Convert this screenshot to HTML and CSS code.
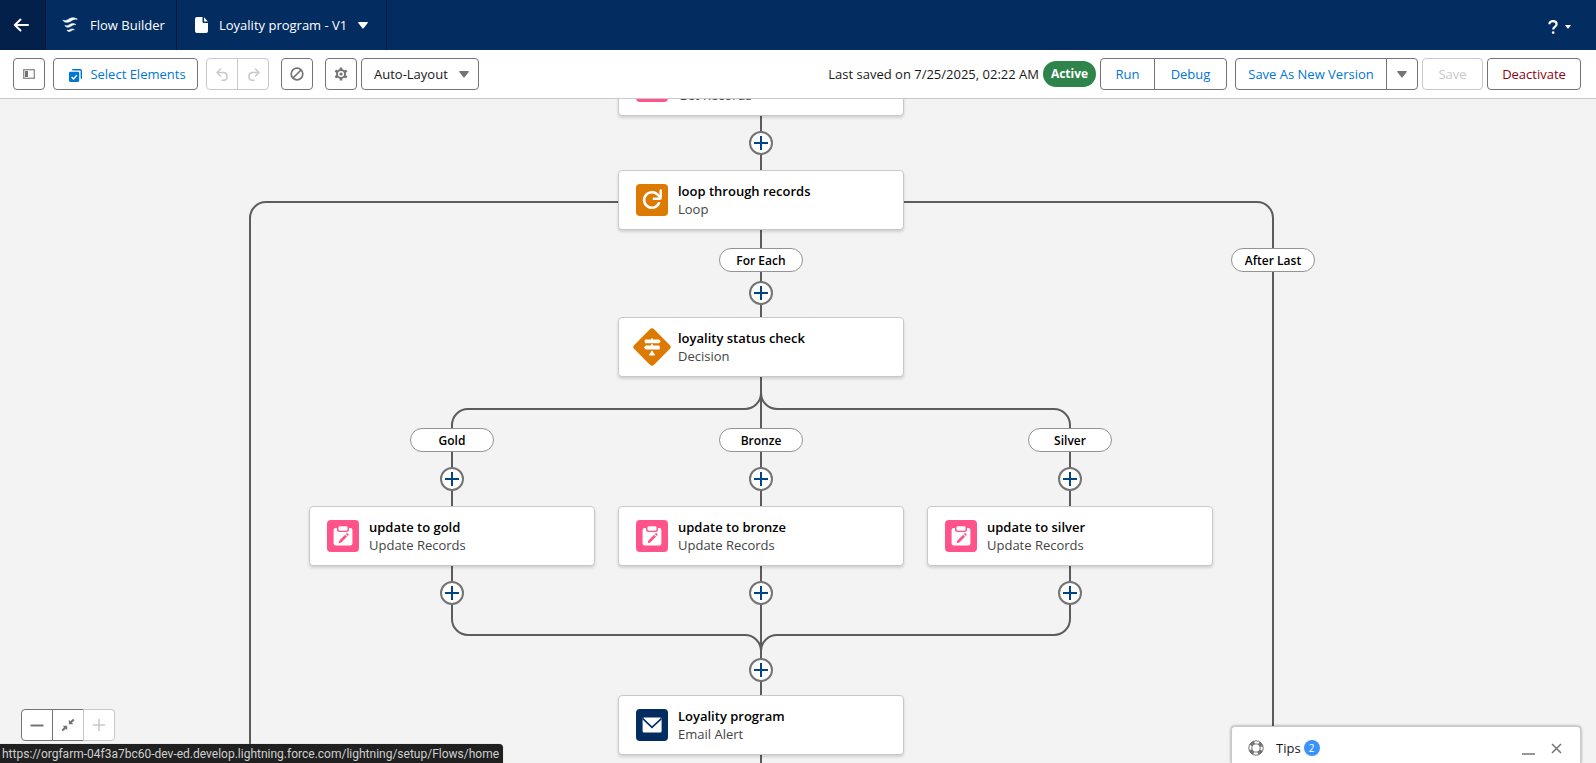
FILE: index.html
```html
<!DOCTYPE html>
<html lang="en">
<head>
<meta charset="utf-8">
<title>Flow Builder</title>
<link rel="stylesheet" href="styles.css">
</head>
<body>
<svg class="defs" aria-hidden="true">
  <symbol id="caret" viewBox="0 0 10 7"><path d="M0.6 0h8.800q.8.2.3.9L5.600 6.300q-.6.600-1.200 0L.3.9Q-.1.2.6 0z"/></symbol>
  <symbol id="plus" viewBox="0 0 14 14"><path d="M7 0v14M0 7h14" stroke="currentColor" stroke-width="2" fill="none"/></symbol>
  <symbol id="update" viewBox="0 0 32 32">
    <rect width="32" height="32" rx="4" fill="#ff538a"/>
    <path fill="#fff" d="M8.600 8h1.400v1.500a2.500 2.500 0 0 0 2.500 2.500h7a2.500 2.500 0 0 0 2.500-2.500V8h1.400a2 2 0 0 1 2 2v13.600a2 2 0 0 1-2 2H8.600a2 2 0 0 1-2-2V10a2 2 0 0 1 2-2z"/>
    <rect x="11.500" y="6.300" width="9" height="4.400" rx="1.400" fill="#fff"/>
    <path fill="#ff538a" d="M11.600 23.200l.8-2.700 5.700-5.700 1.900 1.900-5.700 5.700zM18.800 14.100l.8-.8q.5-.4 1 0l.9.900q.4.500 0 1l-.8.800z"/>
  </symbol>
</svg>

<header class="topbar">
  <a class="back" href="#" aria-label="Back">
    <svg width="16" height="14" viewBox="0 0 16 14"><path d="M15 7H2M7.500 1.500L1.800 7l5.700 5.500" fill="none" stroke="currentColor" stroke-width="2" stroke-linecap="round" stroke-linejoin="round"/></svg>
  </a>
  <div class="app">
    <svg width="16" height="16" viewBox="0 0 16 16" fill="currentColor"><path d="M.8 3.200C3.400 4 5 3.200 7 1.900 9.600.2 12.800.3 15.400 2.200 12.400 2 11 2.700 9 4 6.200 5.900 2.600 6 .8 3.200zM2.800 8.500C5 9 6.300 8.400 7.800 7.400 9.800 6.100 12 6.200 14 7.600 11.900 7.500 10.900 8 9.400 9.100 7.200 10.700 4.200 10.700 2.800 8.500zM5 13.200C6.400 13.500 7.300 13.100 8.200 12.500 9.600 11.600 11.200 11.700 12.400 12.700 11 12.700 10.300 13 9.300 13.800 7.700 15 5.800 14.900 5 13.200z" stroke="currentColor" stroke-width=".5" stroke-linejoin="round"/></svg>
    <span>Flow Builder</span>
  </div>
  <button class="flow-name" type="button">
    <svg width="13" height="16" viewBox="0 0 13 16" fill="currentColor"><path d="M2 0h5.500v4.500A1.500 1.500 0 0 0 9 6h4v8a2 2 0 0 1-2 2H2a2 2 0 0 1-2-2V2a2 2 0 0 1 2-2zM9 .3L12.800 4.600H9z"/></svg>
    <span>Loyality program - V1</span>
    <svg class="caret" width="10" height="7"><use href="#caret"/></svg>
  </button>
  <button class="help" type="button" aria-label="Help">
    <svg width="10" height="14" viewBox="0 0 10 14"><path d="M1.400 4.200C1.400 2.300 3 1.200 5 1.200s3.600 1.200 3.600 3C8.600 6.600 5.200 6.600 5.200 9.600" fill="none" stroke="currentColor" stroke-width="2.200"/><circle cx="5.200" cy="12.600" r="1.300" fill="currentColor"/></svg>
    <svg class="caret" width="6" height="4"><use href="#caret"/></svg>
  </button>
</header>

<div class="toolbar">
  <button class="btn icon" type="button" aria-label="Toggle panel">
    <svg width="12" height="10" viewBox="0 0 12 10"><rect x=".7" y=".7" width="10.600" height="8.600" fill="none" stroke="#939393" stroke-width="1.400"/><rect x="2" y="2" width="3" height="6" fill="#747474"/></svg>
  </button>
  <button class="btn select-elements" type="button">
    <svg width="13" height="13" viewBox="0 0 13 13"><path d="M3.500 1.200Q3.500.7 4 .7h7.300q1 0 1 1V9q0 .5-.5.5" fill="none" stroke="#0176d3" stroke-width="1.400"/><rect y="2.800" width="10.200" height="10.200" rx="1.400" fill="#0176d3"/><path d="M2.600 8l1.900 1.900 3.300-3.700" fill="none" stroke="#fff" stroke-width="1.400"/></svg>
    <span>Select Elements</span>
  </button>
  <div class="group">
    <button class="btn icon" type="button" aria-label="Undo" disabled>
      <svg width="13" height="13" viewBox="0 0 13 13" fill="none" stroke="currentColor" stroke-width="1.500" stroke-linecap="round" stroke-linejoin="round"><path d="M4.500 1L1 4.500 4.500 8M1.500 4.500H8a4 4 0 0 1 0 7.800H6"/></svg>
    </button>
    <button class="btn icon" type="button" aria-label="Redo" disabled>
      <svg width="13" height="13" viewBox="0 0 13 13" fill="none" stroke="currentColor" stroke-width="1.500" stroke-linecap="round" stroke-linejoin="round"><path d="M8.500 1L12 4.500 8.500 8M11.500 4.500H5a4 4 0 0 0 0 7.800h2"/></svg>
    </button>
  </div>
  <button class="btn icon stop" type="button" aria-label="Errors">
    <svg width="14" height="14" viewBox="0 0 14 14" fill="none" stroke="#747474" stroke-width="1.700"><circle cx="7" cy="7" r="5.800"/><path d="M3 11l8-8"/></svg>
  </button>
  <div class="settings">
    <button class="btn icon" type="button" aria-label="Settings">
      <svg width="14" height="14" viewBox="0 0 14 14" fill="none" stroke="#747474"><circle cx="7" cy="7" r="4" stroke-width="1.900"/><circle cx="7" cy="7" r="1.600" fill="#747474" stroke="none"/><path d="M7 .4v2.400M7 11.200v2.400M1.300 3.700l2.100 1.200M10.600 9.100l2.100 1.200M1.300 10.300l2.100-1.200M10.600 4.900l2.100-1.200" stroke-width="2.600"/></svg>
    </button>
    <div class="layout">
      <select aria-label="Layout mode"><option>Auto-Layout</option></select>
      <svg class="caret" width="10" height="7"><use href="#caret"/></svg>
    </div>
  </div>

  <div class="actions">
    <span class="saved">Last saved on 7/25/2025, 02:22 AM</span>
    <span class="badge">Active</span>
    <div class="group run-group">
      <button class="btn run" type="button">Run</button>
      <button class="btn debug" type="button">Debug</button>
    </div>
    <div class="group">
      <button class="btn save-as" type="button">Save As New Version</button>
      <button class="btn icon" type="button" aria-label="More save options"><svg class="caret" width="10" height="7"><use href="#caret"/></svg></button>
    </div>
    <button class="btn save" type="button" disabled>Save</button>
    <button class="btn deactivate" type="button">Deactivate</button>
  </div>
</div>

<main class="canvas">
  <div class="stage">
    <svg class="wires" width="1" height="1" fill="none" stroke="#5c5c5c" stroke-width="2">
      <path d="M0 0V700"/>
      <path d="M-142 103H-495a16 16 0 0 0-16 16V700"/>
      <path d="M142 103H496a16 16 0 0 1 16 16V700"/>
      <path d="M0 278v16a16 16 0 0 1-16 16H-293a16 16 0 0 0-16 16V520a16 16 0 0 0 16 16H-16a16 16 0 0 1 16 16"/>
      <path d="M0 278v16a16 16 0 0 0 16 16H293a16 16 0 0 1 16 16V520a16 16 0 0 1-16 16H16a16 16 0 0 0-16 16"/>
    </svg>

    <button class="node mid get" type="button">
      <svg width="32" height="32"><use href="#update"/></svg>
      <span class="label"><span>Get Records</span></span>
    </button>
    <button class="node mid loop" type="button">
      <svg width="32" height="32" viewBox="0 0 32 32"><rect width="32" height="32" rx="4" fill="#dd7a01"/><path d="M23.400 18.200a7.800 7.800 0 1 1-2-7.800L24 13" fill="none" stroke="#fff" stroke-width="2.600"/><path d="M17.800 14.700h6.300q.6 0 .6-.6V6.400" fill="none" stroke="#fff" stroke-width="2.400" stroke-linecap="round"/></svg>
      <span class="label"><b>loop through records</b><span>Loop</span></span>
    </button>
    <button class="node mid decision" type="button">
      <svg width="32" height="32" viewBox="0 0 32 32" overflow="visible"><rect x="2" y="2" width="28" height="28" rx="3" fill="#dd7a01" transform="rotate(45 16 16)"/><g fill="#fff"><path d="M15 7.500h2v1h6l1.700 1.800-1.700 1.900H9.500q-.8 0-.8-.8V9.300q0-.8.8-.8H15zM9.800 14.600H15v-1.400h2v1.400h6q.8 0 .8.800v2.300q0 .8-.8.800H9.800L7.900 16.600zM15 20h2v1l2 2.800q.3.800-.5.800h-5q-.8 0-.5-.8l2-2.800z"/></g></svg>
      <span class="label"><b>loyality status check</b><span>Decision</span></span>
    </button>
    <button class="node left update" type="button">
      <svg width="32" height="32"><use href="#update"/></svg>
      <span class="label"><b>update to gold</b><span>Update Records</span></span>
    </button>
    <button class="node mid update" type="button">
      <svg width="32" height="32"><use href="#update"/></svg>
      <span class="label"><b>update to bronze</b><span>Update Records</span></span>
    </button>
    <button class="node right update" type="button">
      <svg width="32" height="32"><use href="#update"/></svg>
      <span class="label"><b>update to silver</b><span>Update Records</span></span>
    </button>
    <button class="node mid email" type="button">
      <svg width="32" height="32" viewBox="0 0 32 32"><rect width="32" height="32" rx="4" fill="#032d60"/><rect x="6.600" y="8.400" width="19" height="15" rx="1.500" fill="#fff"/><path d="M6.800 9.600L16 18.300l9.400-8.700" fill="none" stroke="#032d60" stroke-width="1.600"/></svg>
      <span class="label"><b>Loyality program</b><span>Email Alert</span></span>
    </button>

    <span class="pill mid row-each">For Each</span>
    <span class="pill far row-each">After Last</span>
    <span class="pill left row-outcome">Gold</span>
    <span class="pill mid row-outcome">Bronze</span>
    <span class="pill right row-outcome">Silver</span>

    <button class="add mid add-1" type="button" aria-label="Add element"><svg width="14" height="14"><use href="#plus"/></svg></button>
    <button class="add mid add-2" type="button" aria-label="Add element"><svg width="14" height="14"><use href="#plus"/></svg></button>
    <button class="add left add-3" type="button" aria-label="Add element"><svg width="14" height="14"><use href="#plus"/></svg></button>
    <button class="add mid add-3" type="button" aria-label="Add element"><svg width="14" height="14"><use href="#plus"/></svg></button>
    <button class="add right add-3" type="button" aria-label="Add element"><svg width="14" height="14"><use href="#plus"/></svg></button>
    <button class="add left add-4" type="button" aria-label="Add element"><svg width="14" height="14"><use href="#plus"/></svg></button>
    <button class="add mid add-4" type="button" aria-label="Add element"><svg width="14" height="14"><use href="#plus"/></svg></button>
    <button class="add right add-4" type="button" aria-label="Add element"><svg width="14" height="14"><use href="#plus"/></svg></button>
    <button class="add mid add-5" type="button" aria-label="Add element"><svg width="14" height="14"><use href="#plus"/></svg></button>
  </div>

  <div class="group zoom">
    <button class="btn icon" type="button" aria-label="Zoom out"><svg width="14" height="14" viewBox="0 0 14 14"><path d="M.5 7.500h13" stroke="#747474" stroke-width="2"/></svg></button>
    <button class="btn icon" type="button" aria-label="Zoom to fit"><svg width="14" height="14" viewBox="0 0 14 14" fill="#747474"><path d="M7.800 1.800v4.400h4.500L10.900 4.800 13.500 2.200 12 .7 9.300 3.300zM6.200 12.200V7.800H1.700l1.400 1.400L.5 11.800 2 13.300l2.700-2.600z"/></svg></button>
    <button class="btn icon" type="button" aria-label="Zoom in" disabled><svg width="12" height="12" viewBox="0 0 12 12"><path d="M6 0v12M0 6h12" stroke="currentColor" stroke-width="1.500"/></svg></button>
  </div>

  <section class="tips">
    <svg width="16" height="16" viewBox="0 0 16 16" fill="none" stroke="#747474"><circle cx="8" cy="8" r="7.200"/><circle cx="8" cy="8" r="4.100"/><circle cx="8" cy="8" r="5.700" stroke-width="3.200" stroke-dasharray="4.500 4.453" stroke-dashoffset="-2.200"/></svg>
    <span class="tips-title">Tips</span>
    <span class="count">2</span>
    <button class="minimize" type="button" aria-label="Minimize"><svg width="13" height="14" viewBox="0 0 13 14"><path d="M0 13h13" stroke="#747474" stroke-width="1.500"/></svg></button>
    <button type="button" aria-label="Close"><svg width="11" height="11" viewBox="0 0 11 11"><path d="M1 1l9 9M10 1l-9 9" stroke="#747474" stroke-width="1.500"/></svg></button>
  </section>

  <div class="status">https://orgfarm-04f3a7bc60-dev-ed.develop.lightning.force.com/lightning/setup/Flows/home</div>
</main>
</body>
</html>
```
FILE: styles.css
```css
* { box-sizing: border-box; }

body {
  display: flex;
  flex-direction: column;
  height: 100vh;
  margin: 0;
  overflow: hidden;
  font: 13px/18px "Segoe UI", "Open Sans", "Noto Sans", sans-serif;
  color: #181818;
}

button, select { font: inherit; color: inherit; }
button { padding: 0; border: 0; background: none; }
svg { display: block; flex: none; }
.defs { position: absolute; width: 0; height: 0; }
.caret { fill: currentColor; }

/* Top bar */
.topbar {
  display: flex;
  flex: none;
  height: 50px;
  background: #032d60;
  color: #fff;
}
.back {
  display: flex;
  align-items: center;
  justify-content: center;
  width: 46px;
  padding-right: 3px;
  background: #02204a;
  border-right: 1px solid #021a3c;
  color: #fff;
}
.app, .flow-name {
  display: flex;
  align-items: center;
  border-right: 1px solid #021a3c;
}
.app { gap: 12px; width: 131px; padding-left: 16px; }
.flow-name { gap: 11px; width: 210px; padding-left: 18px; }
.help {
  display: flex;
  align-items: center;
  gap: 7px;
  margin-left: auto;
  padding: 4px 25px 0 0;
}

/* Toolbar */
.toolbar {
  display: flex;
  flex: none;
  align-items: center;
  height: 49px;
  padding: 0 15px 0 13px;
  border-bottom: 1px solid #c9c9c9;
  background: #fff;
}
.btn {
  display: flex;
  align-items: center;
  justify-content: center;
  height: 32px;
  border: 1px solid #747474;
  border-radius: 4px;
  background: #fff;
  color: #0176d3;
  white-space: nowrap;
}
.btn.icon { width: 32px; color: #747474; }
.btn:disabled { border-color: #c9c9c9; color: #c9c9c9; }
.group { display: flex; }
.group .btn:not(:first-child) { margin-left: -1px; border-top-left-radius: 0; border-bottom-left-radius: 0; }
.group .btn:not(:last-child) { border-top-right-radius: 0; border-bottom-right-radius: 0; }
.select-elements { gap: 8px; width: 145px; margin: 0 8px; padding-left: 4px; }
.select-elements svg { margin-top: 2px; }
.stop { margin: 0 12px; }
.settings { display: flex; gap: 4px; }
.layout { display: grid; align-items: center; width: 118px; }
.layout > * { grid-area: 1 / 1; }
.layout select {
  width: 100%;
  height: 32px;
  padding: 0 12px;
  border: 1px solid #747474;
  border-radius: 4px;
  background: #fff;
  appearance: none;
}
.layout .caret { justify-self: end; margin-right: 10px; color: #747474; pointer-events: none; }
.actions { display: flex; align-items: center; gap: 4px; margin-left: auto; }
.saved { white-space: nowrap; }
.badge {
  width: 53px;
  border-radius: 13px;
  background: #2e844a;
  color: #fff;
  font-weight: 700;
  font-size: 12px;
  line-height: 26px;
  text-align: center;
}
.run-group { margin-right: 4px; }
.run { width: 55px; }
.debug { width: 73px; }
.save-as { width: 152px; }
.save { width: 61px; }
.deactivate { width: 94px; color: #8e030f; }

/* Canvas */
.canvas {
  position: relative;
  flex: 1;
  min-height: 0;
  overflow: hidden;
  background: #f3f3f3;
}
.stage { position: absolute; top: 0; left: calc(50% - 37px); }
.wires { position: absolute; overflow: visible; }
.node, .pill, .add { position: absolute; transform: translateX(-50%); }
.left { left: -309px; }
.mid { left: 0; }
.right { left: 309px; }
.far { left: 512px; }

.node {
  display: flex;
  align-items: center;
  gap: 10px;
  width: 286px;
  height: 60px;
  padding: 0 17px;
  border: 1px solid #c9c9c9;
  border-radius: 4px;
  background: #fff;
  box-shadow: 0 2px 3px rgba(0, 0, 0, 0.14);
  text-align: left;
  white-space: nowrap;
}
.label { display: flex; flex-direction: column; }
.label b { font-weight: 600; color: #000; }
.label span { color: #444; }
.get { top: -43px; }
.get .label { padding-top: 18px; }
.loop { top: 71px; }
.decision { top: 218px; }
.update { top: 407px; }
.email { top: 596px; }

.pill {
  width: 84px;
  height: 24px;
  border: 1px solid #939393;
  border-radius: 12px;
  background: #fff;
  color: #000;
  font-size: 12px;
  font-weight: 600;
  line-height: 23px;
  text-align: center;
}
.row-each { top: 149px; }
.row-outcome { top: 329px; }

.add {
  display: flex;
  align-items: center;
  justify-content: center;
  width: 24px;
  height: 24px;
  border: 2px solid #747474;
  border-radius: 50%;
  background: #fff;
  color: #014486;
}
.add-1 { top: 32px; }
.add-2 { top: 182px; }
.add-3 { top: 368px; }
.add-4 { top: 482px; }
.add-5 { top: 559px; }

/* Overlays */
.zoom { position: absolute; left: 21px; bottom: 22px; }

.tips {
  position: absolute;
  right: 15px;
  bottom: 0;
  display: flex;
  align-items: center;
  width: 350px;
  height: 37px;
  padding: 6px 18px 0 16px;
  border: 1px solid #c9c9c9;
  border-bottom: 0;
  border-radius: 4px 4px 0 0;
  background: #fff;
  box-shadow: 0 0 3px rgba(0, 0, 0, 0.4);
}
.tips-title { margin: 0 3px 0 12px; }
.count {
  width: 16px;
  border-radius: 8px;
  background: #3b93fa;
  color: #fff;
  font-size: 10px;
  line-height: 16px;
  text-align: center;
}
.minimize { margin: 0 16px 0 auto; }

.status {
  position: absolute;
  left: 0;
  bottom: 0;
  padding: 1px 4px 0 2px;
  border-top-right-radius: 4px;
  background: #202020;
  box-shadow: 0 0 1px #999;
  color: #d0d0d0;
  font-family: "Segoe UI", Roboto, sans-serif;
  font-size: 12px;
  line-height: 18px;
  white-space: nowrap;
}
```
